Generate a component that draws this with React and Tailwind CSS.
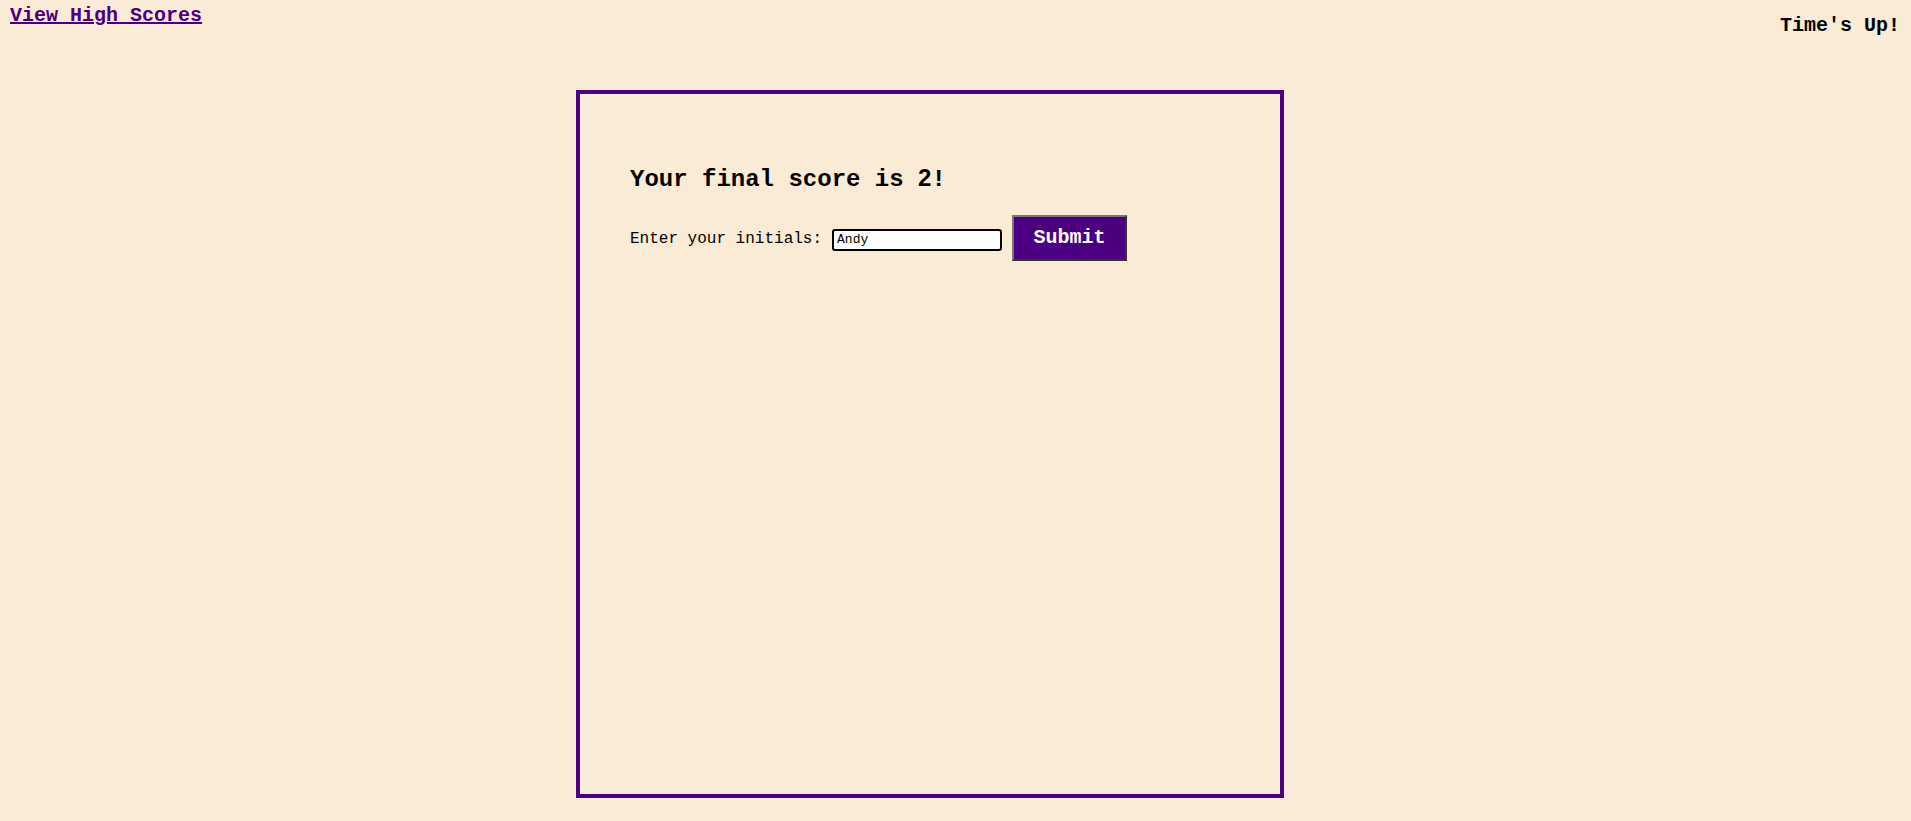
import React from "react";

export default function App() {
  return (
    <div className="min-h-screen w-full bg-[#faebd7] font-['Liberation_Mono',monospace] text-black">
      <header className="flex items-start justify-between">
        <a
          href="#"
          className="ml-[10px] mt-[4px] text-[20px] leading-[23px] font-bold text-[#4b0082] underline"
        >
          View High Scores
        </a>
        <div className="mr-[11px] mt-[14px] text-[20px] leading-[23px] font-bold">
          Time's Up!
        </div>
      </header>
      <main className="ml-[576px] mt-[53px] w-[708px] h-[708px] border-4 border-[#4b0082] pl-[50px] pt-[70px]">
        <h2 className="text-[24px] leading-[27px] font-bold">
          Your final score is{" "}
          <span className="font-['Liberation_Sans',sans-serif]">2</span>!
        </h2>
        <div className="mt-[22px] flex items-baseline">
          <label className="text-[16px] leading-[18px]">Enter your initials:</label>
          <input
            type="text"
            defaultValue="Andy"
            className="ml-[10px] h-[22px] w-[170px] rounded-[3px] border-2 border-black bg-white pl-[3px] text-[13px] font-['Liberation_Mono',monospace] text-black outline-none"
          />
          <button className="ml-[10px] h-[46px] w-[115px] border-2 border-t-[#777777] border-l-[#777777] border-b-[#333333] border-r-[#333333] bg-[#4b0082] text-[20px] font-bold text-white">
            Submit
          </button>
        </div>
      </main>
    </div>
  );
}
